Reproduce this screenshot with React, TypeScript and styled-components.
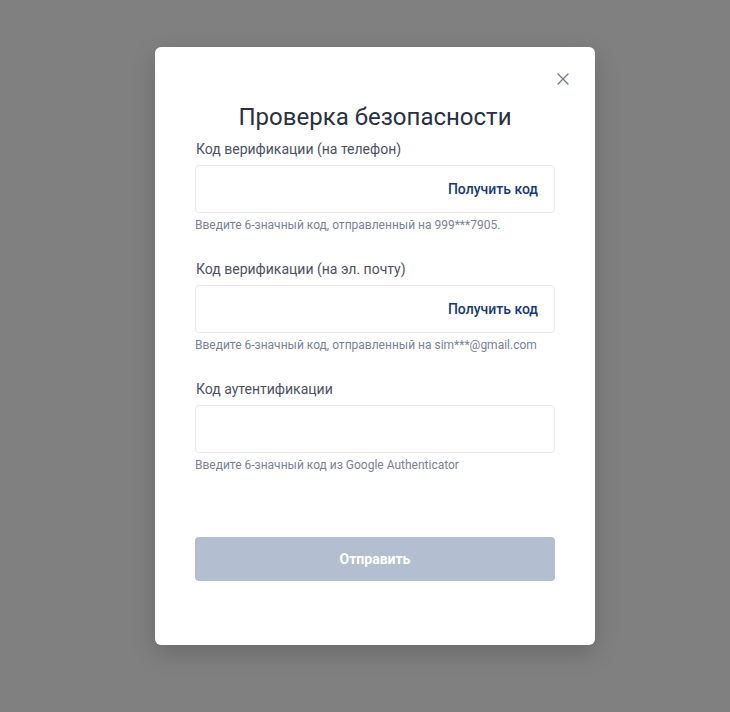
import React from "react";
import styled, { createGlobalStyle } from "styled-components";

const Global = createGlobalStyle`
  html, body { margin: 0; padding: 0; }
  body { background: #808080; font-family: Roboto, "Noto Sans", Arial, sans-serif; }
  * { box-sizing: border-box; }
`;

const Overlay = styled.div`
  width: 730px;
  height: 712px;
  background: #808080;
  display: flex;
  justify-content: flex-start;
  align-items: flex-start;
  padding: 47px 0 0 155px;
`;

const Modal = styled.div`
  position: relative;
  width: 440px;
  height: 598px;
  background: #ffffff;
  border-radius: 6px;
  box-shadow: 0 8px 24px rgba(0, 0, 0, 0.18);
  padding: 54px 40px 64px;
  display: flex;
  flex-direction: column;
`;

const Close = styled.button`
  position: absolute;
  top: 24px;
  right: 24px;
  width: 16px;
  height: 16px;
  padding: 0;
  border: 0;
  background: transparent;
  display: flex;
  align-items: center;
  justify-content: center;
  cursor: pointer;
`;

const Title = styled.h2`
  margin: 0 0 6px;
  font-size: 24px;
  line-height: 32px;
  font-weight: 400;
  color: #2a2f42;
  text-align: center;
`;

const Field = styled.div<{ $gap?: number }>`
  display: flex;
  flex-direction: column;
  margin-bottom: ${(p) => p.$gap ?? 26}px;
`;

const Label = styled.label`
  font-size: 14px;
  line-height: 20px;
  color: #4c5162;
  margin-bottom: 6px;
  padding-left: 1px;
`;

const InputBox = styled.div`
  height: 48px;
  border: 1px solid #e6e8ed;
  border-radius: 4px;
  display: flex;
  align-items: center;
  padding: 0 16px;
`;

const Input = styled.input`
  flex: 1;
  border: 0;
  outline: none;
  font-family: inherit;
  font-size: 14px;
  color: #222736;
  background: transparent;
  min-width: 0;
`;

const GetCode = styled.span`
  font-size: 14px;
  font-weight: 500;
  color: #17397a;
  white-space: nowrap;
`;

const Hint = styled.div`
  margin-top: 4px;
  font-size: 12px;
  line-height: 16px;
  color: #7a8296;
`;

const Submit = styled.button`
  margin-top: auto;
  height: 44px;
  width: 100%;
  border: 0;
  border-radius: 4px;
  background: #b3bfd1;
  color: #ffffff;
  font-family: inherit;
  font-size: 14px;
  font-weight: 700;
`;

export default function App() {
  return (
    <>
      <Global />
      <Overlay>
        <Modal>
          <Close aria-label="close">
            <svg width="12" height="12" viewBox="0 0 12 12">
              <path d="M1 1L11 11M11 1L1 11" stroke="#6f778a" strokeWidth="1.3" strokeLinecap="round" />
            </svg>
          </Close>
          <Title>Проверка безопасности</Title>
          <Field>
            <Label>Код верификации (на телефон)</Label>
            <InputBox>
              <Input />
              <GetCode>Получить код</GetCode>
            </InputBox>
            <Hint>Введите 6-значный код, отправленный на 999***7905.</Hint>
          </Field>
          <Field>
            <Label>Код верификации (на эл. почту)</Label>
            <InputBox>
              <Input />
              <GetCode>Получить код</GetCode>
            </InputBox>
            <Hint>Введите 6-значный код, отправленный на sim***@gmail.com</Hint>
          </Field>
          <Field $gap={0}>
            <Label>Код аутентификации</Label>
            <InputBox>
              <Input />
            </InputBox>
            <Hint>Введите 6-значный код из Google Authenticator</Hint>
          </Field>
          <Submit disabled>Отправить</Submit>
        </Modal>
      </Overlay>
    </>
  );
}
